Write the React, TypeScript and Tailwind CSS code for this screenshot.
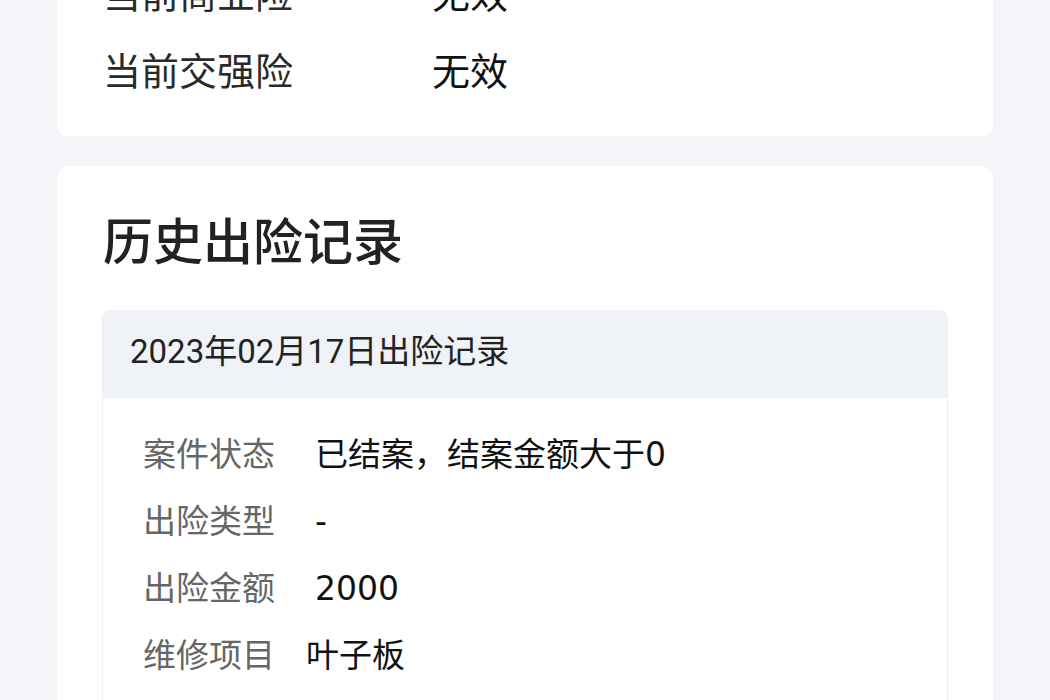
import React from "react";

const font = { fontFamily: 'Roboto, "Noto Sans CJK SC", sans-serif' };
const valueFont = { fontFamily: '"DejaVu Sans", "Noto Sans CJK SC", sans-serif' };

const policy = [
  { label: "当前商业险", value: "无效" },
  { label: "当前交强险", value: "无效" },
];

const claim = [
  { label: "案件状态", value: "已结案，结案金额大于0", gap: "ml-[40px]" },
  { label: "出险类型", value: "-", gap: "ml-[40px]" },
  { label: "出险金额", value: "2000", gap: "ml-[40px]" },
  { label: "维修项目", value: "叶子板", gap: "ml-[31px]" },
];

export default function App() {
  return (
    <div
      className="w-[1050px] h-[700px] overflow-hidden bg-[#f3f5f8] px-[57px]"
      style={font}
    >
      <div className="-mt-[69px] bg-white rounded-[12px] pt-[25px] pb-[26px] px-[46px]">
        {policy.map((row) => (
          <div key={row.label} className="flex items-center h-[77px]">
            <span className="w-[329px] text-[38px] leading-none text-[#2a2a2a]">
              {row.label}
            </span>
            <span className="text-[38px] leading-none text-[#111]">
              {row.value}
            </span>
          </div>
        ))}
      </div>

      <div className="mt-[30px] bg-white rounded-[12px] pt-[47px] px-[45px] pb-[40px]">
        <h2 className="h-[60px] flex items-center pl-[1px] text-[50px] font-medium text-[#222]">
          历史出险记录
        </h2>
        <div className="mt-[37px] rounded-[8px] border border-[#eceff3] overflow-hidden">
          <div className="h-[87px] flex items-center pl-[27px] pb-[6px] bg-[#eff2f6] text-[33px] text-[#222]">
            2023年02月17日出险记录
          </div>
          <div className="pt-[23px] pl-[40px] pb-[20px]">
            {claim.map((row) => (
              <div key={row.label} className="flex items-center h-[67px]">
                <span className="text-[33px] leading-none text-[#666]">
                  {row.label}
                </span>
                <span
                  className={`${row.gap} text-[33px] leading-none text-[#111]`}
                  style={valueFont}
                >
                  {row.value}
                </span>
              </div>
            ))}
          </div>
        </div>
      </div>
    </div>
  );
}
